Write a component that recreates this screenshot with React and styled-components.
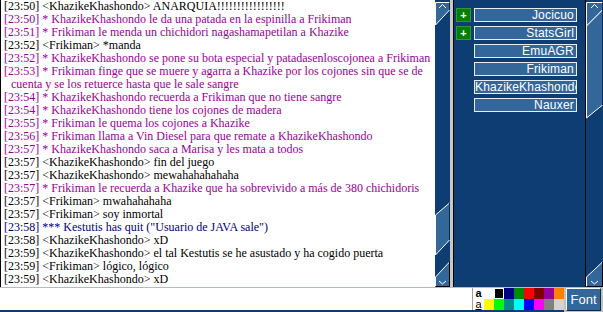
import React from 'react';
import styled, { createGlobalStyle } from 'styled-components';

const GlobalStyle = createGlobalStyle`
  html, body {
    margin: 0;
    padding: 0;
    overflow: hidden;
    background: #0d3d73;
  }
`;

const Frame = styled.div`
  width: 603px;
  height: 312px;
  display: flex;
  flex-direction: column;
  background: #0d3d73;
`;

const TopRow = styled.div`
  display: flex;
  height: 287px;
`;

const ChatLog = styled.div`
  width: 434px;
  height: 287px;
  padding-left: 2px;
  border-left: 1px solid #000;
  background: #fff;
  overflow: hidden;
  font-family: 'Liberation Serif', 'Times New Roman', serif;
  font-size: 12px;
  line-height: 13px;
`;

const Line = styled.div`
  color: ${p => p.$color || '#000'};
  padding-left: 8px;
  text-indent: -7px;
`;

const Track = styled.div`
  width: ${p => p.$width}px;
  height: 287px;
  background: #0d3d73;
  flex-shrink: 0;
  svg { display: block; }
`;

const Divider = styled.div`
  width: 3px;
  background: #c8c8c8;
  flex-shrink: 0;
`;

const UserPanel = styled.div`
  width: 129px;
  border-left: 1px solid #000;
  border-right: 1px solid #000;
  padding: 8px 0 0 2px;
  box-sizing: content-box;
  display: flex;
  flex-direction: column;
  gap: 4px;
  flex-shrink: 0;
`;

const UserRow = styled.div`
  display: flex;
  align-items: center;
  gap: 3px;
  height: 14px;
`;

const OpBox = styled.div`
  width: 13px;
  height: 12px;
  border: 1px solid ${p => (p.$visible ? '#3d8f3d' : 'transparent')};
  background: ${p => (p.$visible ? '#008000' : 'transparent')};
  color: #fff;
  font-family: 'Liberation Sans', Arial, sans-serif;
  font-weight: bold;
  font-size: 11px;
  line-height: 12px;
  text-align: center;
`;

const NameBox = styled.div`
  width: 99px;
  height: 12px;
  border: 1px solid #e8eef4;
  background: #336699;
  color: #fff;
  font-family: 'Liberation Sans', Arial, sans-serif;
  font-size: 12px;
  letter-spacing: 0.2px;
  line-height: 12px;
  text-align: right;
  padding-right: 2px;
  overflow: hidden;
  white-space: nowrap;
`;

const BottomBar = styled.div`
  display: flex;
  height: 24px;
  border-top: 1px solid #aebccb;
  background: #0d3d73;
`;

const MessageInput = styled.input`
  width: 473px;
  height: 22px;
  margin: 0;
  padding: 0 3px;
  box-sizing: border-box;
  border: none;
  border-right: 1px solid #a0a0a0;
  background: #fff;
  outline: none;
  font-family: 'Liberation Serif', serif;
  font-size: 12px;
`;

const Palette = styled.div`
  display: grid;
  grid-template-columns: 11px repeat(8, 10px);
  grid-template-rows: 11px 11px;
  background: #fff;
  height: 22px;
`;

const StyleMark = styled.div`
  font-family: 'Liberation Sans', Arial, sans-serif;
  font-size: 11px;
  font-weight: ${p => (p.$bold ? 'bold' : 'normal')};
  text-decoration: ${p => (p.$underline ? 'underline' : 'none')};
  line-height: 11px;
  color: #000;
  text-align: center;
  background: #fff;
`;

const Swatch = styled.div`
  background: ${p => p.$color};
  box-shadow: ${p => (p.$selected ? 'inset 0 0 0 1px #fff, inset 0 0 0 2px #000' : 'none')};
`;

const FontArea = styled.div`
  flex: 1;
  background: #c0c0c0;
  padding: 0 2px 0 2px;
  display: flex;
`;

const FontButton = styled.button`
  width: 35px;
  height: 23px;
  margin: 0;
  padding: 0;
  border: 1px solid;
  border-color: #fff #0a2a55 #0a2a55 #fff;
  background: #336699;
  color: #fff;
  font-family: 'Liberation Sans', Arial, sans-serif;
  font-size: 13px;
`;

const BTN = '#336699';

function ScrollBar({ width, thumbTop, thumbBottom }) {
  const w = width - 0.5;
  const upBottomLeft = width === 15 ? 25 : 26;
  const up = `0.5,2.5 ${w},2.5 ${w},10 0.5,${upBottomLeft}`;
  return (
    <svg width={width} height={287} viewBox={`0 0 ${width} 287`}>
      <polygon points={up} fill={BTN} />
      <polyline points={`0.5,${upBottomLeft} 0.5,2.5 ${w},2.5`} fill="none" stroke="#fff" />
      <line x1={w} y1={2.5} x2={w} y2={10} stroke="#0a2a55" />
      <line x1={0.5} y1={upBottomLeft} x2={w} y2={10} stroke="#fff" />
      <polyline
        points={`${width / 2 - 3.5},8 ${width / 2},4.5 ${width / 2 + 3.5},8`}
        fill="none"
        stroke="#fff"
      />
      {thumbTop != null && (
        <>
          <polygon
            points={`0.5,${thumbTop[0]} ${w},${thumbTop[1]} ${w},${thumbBottom[1]} 0.5,${thumbBottom[0]}`}
            fill={BTN}
          />
          <polyline
            points={`${w},${thumbBottom[1]} 0.5,${thumbBottom[0]} 0.5,${thumbTop[0]} ${w},${thumbTop[1]}`}
            fill="none"
            stroke="#fff"
          />
          <line x1={w} y1={thumbTop[1]} x2={w} y2={thumbBottom[1]} stroke="#0a2a55" />
        </>
      )}
      <polygon points={`0.5,277 ${w},262 ${w},286.5 0.5,286.5`} fill={BTN} />
      <polyline points={`0.5,286.5 0.5,277 ${w},262`} fill="none" stroke="#fff" />
      <polyline points={`${w},262 ${w},286.5 0.5,286.5`} fill="none" stroke="#000" />
      <polyline
        points={`${width / 2 - 3.5},281 ${width / 2},284 ${width / 2 + 3.5},281`}
        fill="none"
        stroke="#fff"
      />
    </svg>
  );
}

const PURPLE = '#990099';
const NAVY = '#000080';

const messages = [
  ['[23:50] <KhazikeKhashondo> ANARQUIA!!!!!!!!!!!!!!!!!'],
  ['[23:50] * KhazikeKhashondo le da una patada en la espinilla a Frikiman', PURPLE],
  ['[23:51] * Frikiman le menda un chichidori nagashamapetilan a Khazike', PURPLE],
  ['[23:52] <Frikiman> *manda'],
  ['[23:52] * KhazikeKhashondo se pone su bota especial y patadasenloscojonea a Frikiman', PURPLE],
  ['[23:53] * Frikiman finge que se muere y agarra a Khazike por los cojones sin que se de cuenta y se los retuerce hasta que le sale sangre', PURPLE],
  ['[23:54] * KhazikeKhashondo recuerda a Frikiman que no tiene sangre', PURPLE],
  ['[23:54] * KhazikeKhashondo tiene los cojones de madera', PURPLE],
  ['[23:55] * Frikiman le quema los cojones a Khazike', PURPLE],
  ['[23:56] * Frikiman llama a Vin Diesel para que remate a KhazikeKhashondo', PURPLE],
  ['[23:57] * KhazikeKhashondo saca a Marisa y les mata a todos', PURPLE],
  ['[23:57] <KhazikeKhashondo> fin del juego'],
  ['[23:57] <KhazikeKhashondo> mewahahahahaha'],
  ['[23:57] * Frikiman le recuerda a Khazike que ha sobrevivido a más de 380 chichidoris', PURPLE],
  ['[23:57] <Frikiman> mwahahahaha'],
  ['[23:57] <Frikiman> soy inmortal'],
  ['[23:58] *** Kestutis has quit ("Usuario de JAVA sale")', NAVY],
  ['[23:58] <KhazikeKhashondo> xD'],
  ['[23:59] <KhazikeKhashondo> el tal Kestutis se he asustado y ha cogido puerta'],
  ['[23:59] <Frikiman> lógico, lógico'],
  ['[23:59] <KhazikeKhashondo> xD'],
];

const users = [
  { name: 'Jocicuo', op: true },
  { name: 'StatsGirl', op: true },
  { name: 'EmuAGR' },
  { name: 'Frikiman' },
  { name: 'KhazikeKhashondo' },
  { name: 'Nauxer' },
];

const topColors = ['#ffffff', '#000000', '#000080', '#008c00', '#ff0000', '#800000', '#990099', '#ff8000'];
const bottomColors = ['#ffff00', '#00ff00', '#008c8c', '#00ffff', '#0000ff', '#ff00ff', '#808080', '#d3d3d3'];

export default function App() {
  return (
    <>
      <GlobalStyle />
      <Frame>
        <TopRow>
          <ChatLog>
            {messages.map(([text, color], i) => (
              <Line key={i} $color={color}>{text}</Line>
            ))}
          </ChatLog>
          <Track $width={15}>
            <ScrollBar width={15} thumbTop={[215, 203]} thumbBottom={[255, 240]} />
          </Track>
          <Divider />
          <UserPanel>
            {users.map(u => (
              <UserRow key={u.name}>
                <OpBox $visible={u.op}>{u.op ? '+' : ''}</OpBox>
                <NameBox>{u.name}</NameBox>
              </UserRow>
            ))}
          </UserPanel>
          <Track $width={17}>
            <ScrollBar width={17} thumbTop={[26, 10]} thumbBottom={[118, 105]} />
          </Track>
        </TopRow>
        <BottomBar>
          <MessageInput type="text" />
          <Palette>
            <StyleMark $bold>a</StyleMark>
            {topColors.map((c, i) => (
              <Swatch key={c} $color={c} $selected={i === 1} />
            ))}
            <StyleMark $underline>a</StyleMark>
            {bottomColors.map(c => (
              <Swatch key={c} $color={c} />
            ))}
          </Palette>
          <FontArea>
            <FontButton>Font</FontButton>
          </FontArea>
        </BottomBar>
      </Frame>
    </>
  );
}
